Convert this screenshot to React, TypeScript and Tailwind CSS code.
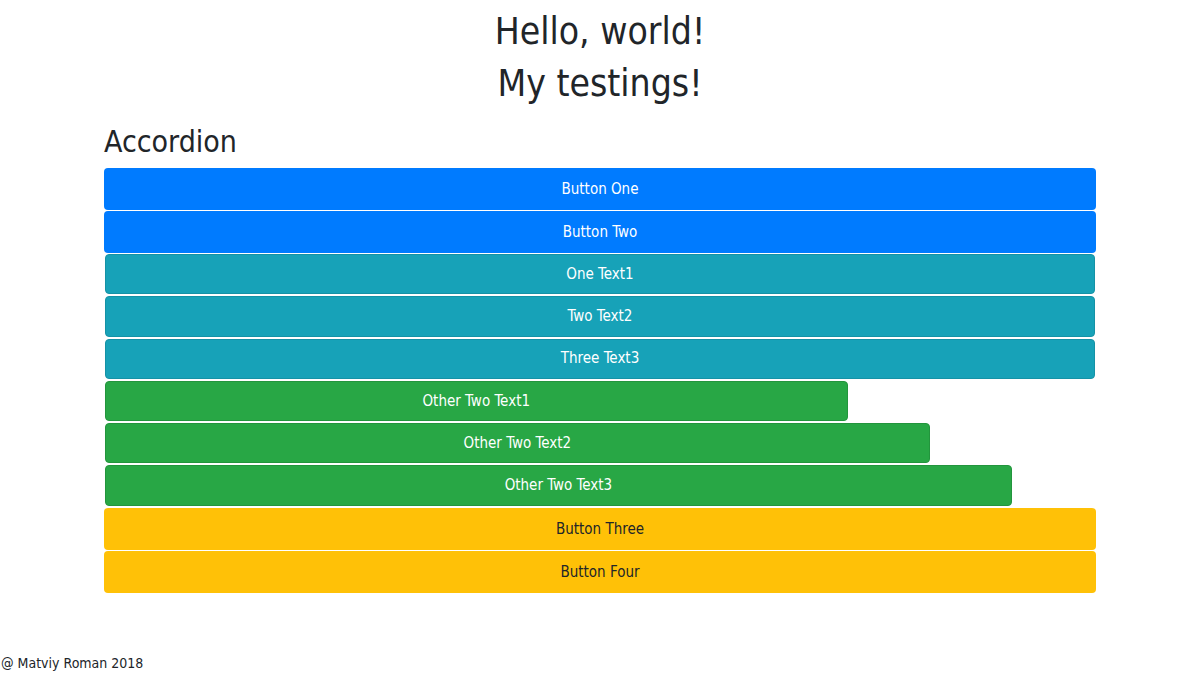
const font = { fontFamily: '"DejaVu Sans", sans-serif' }

const innerRows = ['One Text1', 'Two Text2', 'Three Text3']
const greenRows = [
    { label: 'Other Two Text1', width: 'w-[75%]' },
    { label: 'Other Two Text2', width: 'w-[83.3%]' },
    { label: 'Other Two Text3', width: 'w-[91.6%]' },
]

function Bar({ label, className }: { label: string; className: string }) {
    return (
        <div className={`flex items-center justify-center rounded-[4px] text-[15px] ${className}`}>
            {label}
        </div>
    )
}

export default function App() {
    return (
        <div className="min-h-[700px] bg-white text-[#212529] flex flex-col font-stretch-condensed" style={font}>
            <div className="pt-[6px] text-center text-[37px] leading-[52px] text-[#212529]">
                <h1>Hello, world!</h1>
                <h1>My testings!</h1>
            </div>

            <div className="mx-auto w-[992px]">
                <h2 className="mt-[10px] text-[30px] leading-[44px]">Accordion</h2>

                <div className="mt-[4px] flex flex-col gap-[1px]">
                    <Bar label="Button One" className="h-[42px] bg-[#007bff] text-white" />
                    <Bar label="Button Two" className="h-[42px] bg-[#007bff] text-white" />

                    <div className="flex flex-col gap-[2px] px-[1px] pb-[1px]">
                        {innerRows.map((r) => (
                            <Bar key={r} label={r} className="h-[40.3px] bg-[#17a2b8] border border-[#1592a6] text-white" />
                        ))}
                        {greenRows.map((r) => (
                            <Bar key={r.label} label={r.label} className={`h-[40.3px] ${r.width} bg-[#28a745] border border-[#23953d] text-white`} />
                        ))}
                    </div>

                    <Bar label="Button Three" className="h-[42px] bg-[#ffc107] text-[#212529]" />
                    <Bar label="Button Four" className="h-[42px] bg-[#ffc107] text-[#212529]" />
                </div>
            </div>

            <footer className="mt-[58px] pl-[1px] text-[14px] leading-[24px]">@ Matviy Roman 2018</footer>
        </div>
    )
}
